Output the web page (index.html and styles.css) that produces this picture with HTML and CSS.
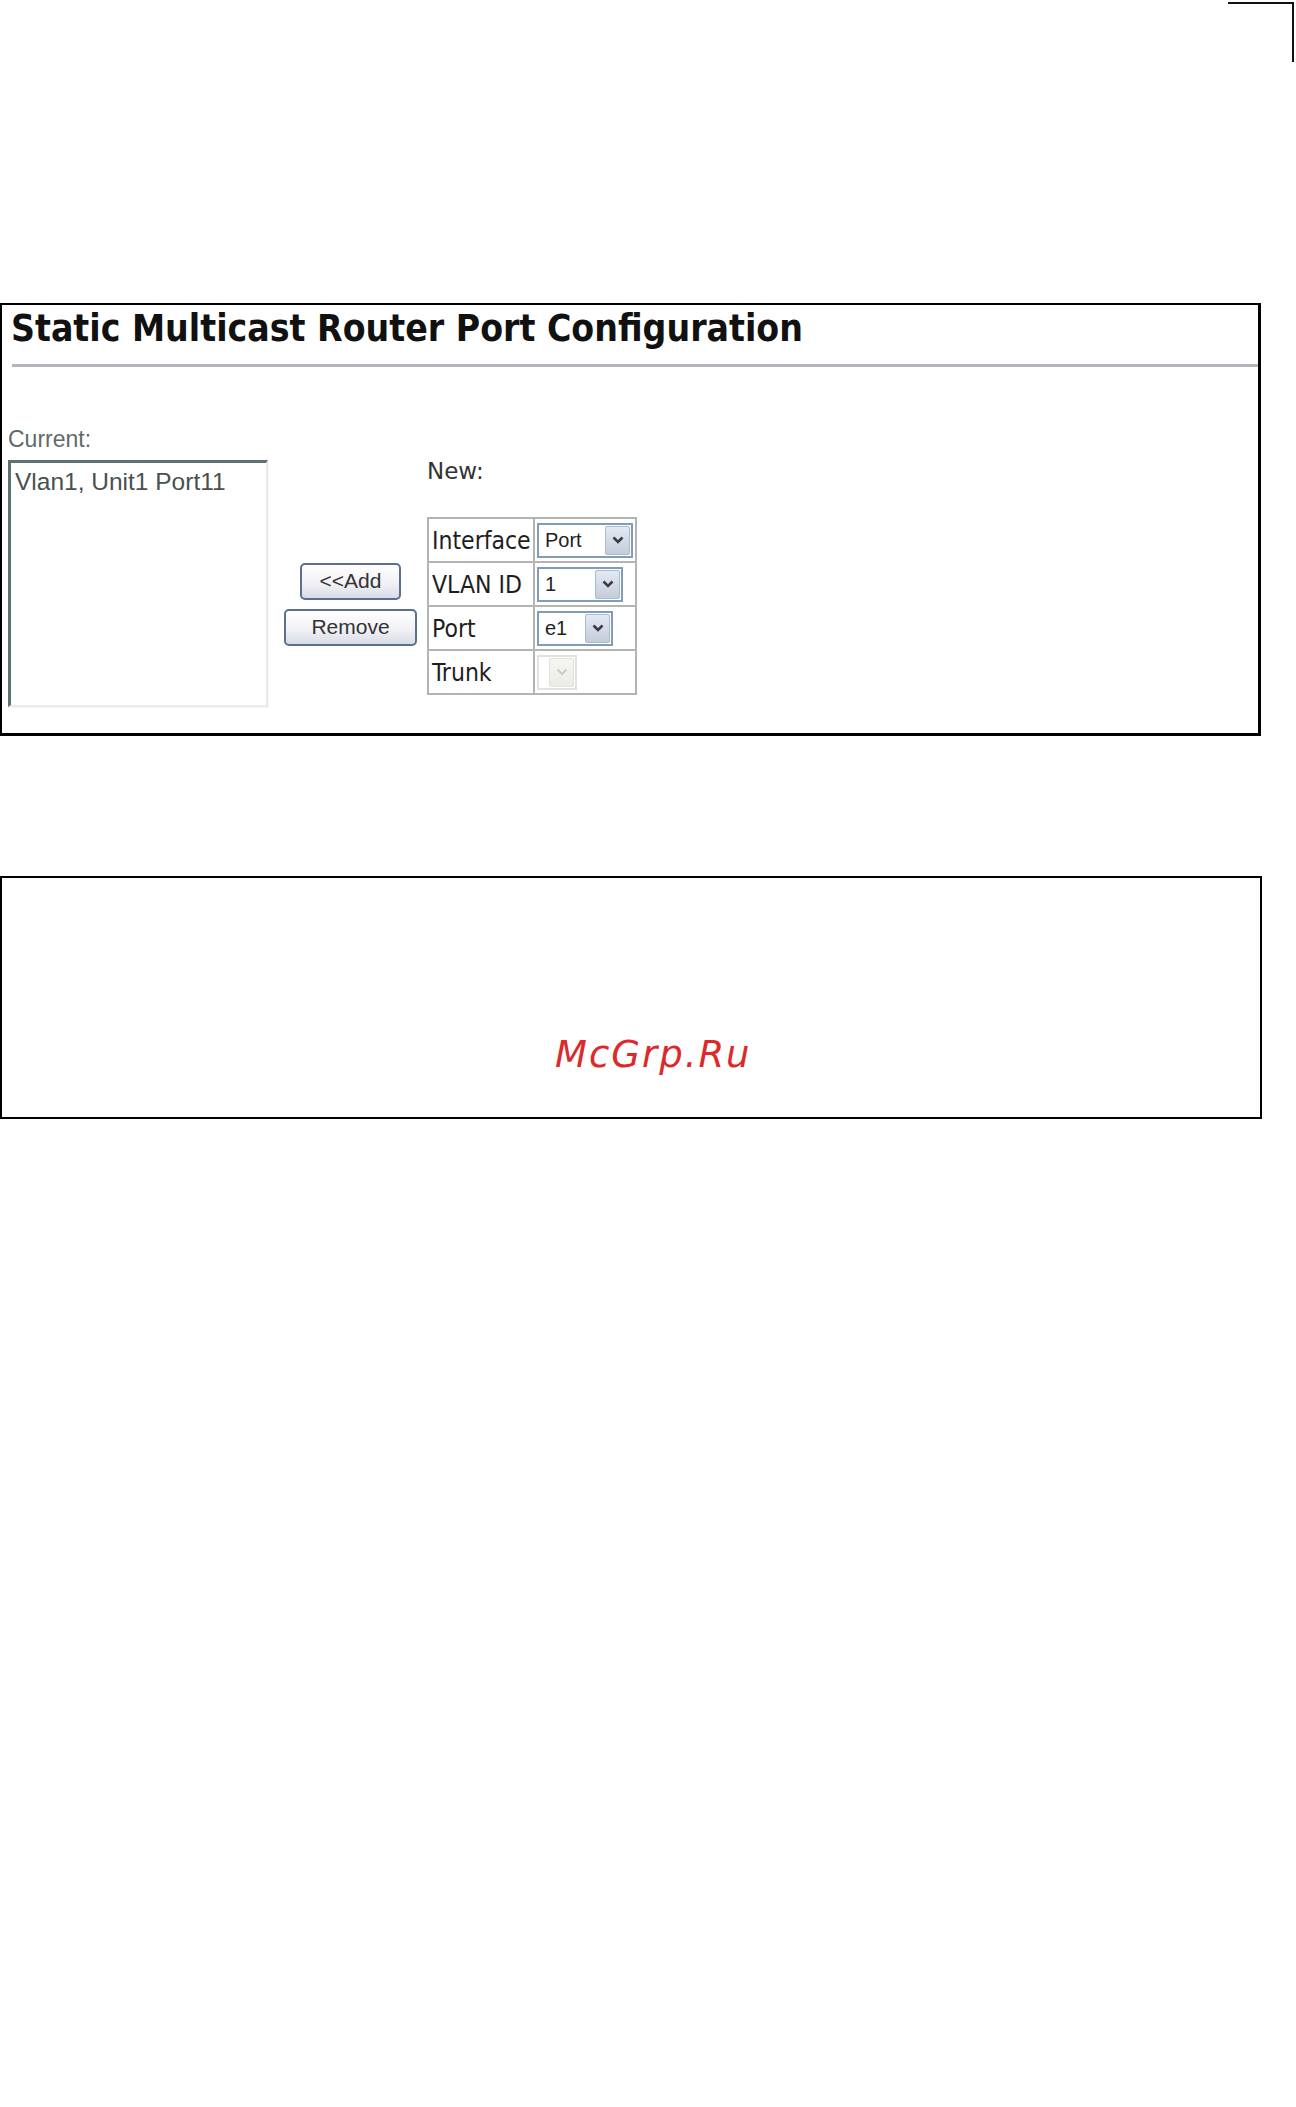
FILE: index.html
```html
<!DOCTYPE html>
<html lang="en">

<head>
    <meta charset="UTF-8">
    <title>Static Multicast Router Port Configuration</title>
    <link rel="stylesheet" href="styles.css">
</head>

<body>
    <div class="crop"></div>

    <div class="panel">
        <h1 class="title">Static Multicast Router Port Configuration</h1>
        <div class="rule"></div>

        <div class="content">
            <div class="current">
                <div class="label">Current:</div>
                <div class="listbox">
                    <div class="option">Vlan1, Unit1 Port11</div>
                </div>
            </div>

            <div class="actions">
                <div class="btn add">&lt;&lt;Add</div>
                <div class="btn remove">Remove</div>
            </div>

            <div class="new">
                <div class="newLabel">New:</div>
                <table class="form">
                    <tr>
                        <td class="name">Interface</td>
                        <td class="value">
                            <div class="sel sel-if">
                                <span class="text">Port</span>
                                <span class="arrow"><svg width="12" height="8" viewBox="0 0 12 8"><path d="M1.5 1.5 L6 6 L10.5 1.5" fill="none" stroke="#3a3a4a" stroke-width="2.6"/></svg></span>
                            </div>
                        </td>
                    </tr>
                    <tr>
                        <td class="name">VLAN ID</td>
                        <td class="value">
                            <div class="sel sel-vlan">
                                <span class="text">1</span>
                                <span class="arrow"><svg width="12" height="8" viewBox="0 0 12 8"><path d="M1.5 1.5 L6 6 L10.5 1.5" fill="none" stroke="#3a3a4a" stroke-width="2.6"/></svg></span>
                            </div>
                        </td>
                    </tr>
                    <tr>
                        <td class="name">Port</td>
                        <td class="value">
                            <div class="sel sel-port">
                                <span class="text">e1</span>
                                <span class="arrow"><svg width="12" height="8" viewBox="0 0 12 8"><path d="M1.5 1.5 L6 6 L10.5 1.5" fill="none" stroke="#3a3a4a" stroke-width="2.6"/></svg></span>
                            </div>
                        </td>
                    </tr>
                    <tr>
                        <td class="name">Trunk</td>
                        <td class="value">
                            <div class="sel sel-trunk">
                                <span class="text"></span>
                                <span class="arrow"><svg width="12" height="8" viewBox="0 0 12 8"><path d="M1.5 1.5 L6 6 L10.5 1.5" fill="none" stroke="#c8ccc8" stroke-width="2"/></svg></span>
                            </div>
                        </td>
                    </tr>
                </table>
            </div>
        </div>
    </div>

    <div class="panel2">
        <div class="mark">McGrp.Ru</div>
    </div>
</body>

</html>
```

FILE: styles.css
```css
* {
    margin: 0px;
    padding: 0px;
    box-sizing: border-box;
}

html,
body {
    width: 100%;
    height: 100%;
    background-color: #fff;
}

body {
    font-family: "Liberation Sans", Arial, sans-serif;
    color: #222;
}

.crop {
    margin: 2px 0 0 1228px;
    width: 66px;
    height: 60px;
    border-top: 2px solid #111;
    border-right: 2px solid #111;
}

.panel {
    margin-top: 241px;
    width: 1261px;
    border: 2px solid #000;
    border-right-width: 3px;
    border-bottom-width: 3px;
}

.title {
    padding: 2px 0 0 9px;
    font-family: "DejaVu Sans Condensed", "DejaVu Sans", sans-serif;
    font-stretch: condensed;
    font-weight: bold;
    font-size: 37px;
    line-height: 43px;
    letter-spacing: 0;
    color: #111;
}

.rule {
    margin: 14px 0 0 10px;
    height: 3px;
    background-color: #b4b4bc;
}

.content {
    display: flex;
    align-items: flex-start;
    padding: 0 0 26px 6px;
}

.current {
    padding-top: 59px;
}

.label {
    font-size: 23px;
    line-height: 26px;
    color: #5f6b6b;
}

.listbox {
    margin-top: 8px;
    width: 260px;
    height: 247px;
    border-top: 3px solid #5c7272;
    border-left: 3px solid #5c7272;
    border-right: 2px solid #ececec;
    border-bottom: 2px solid #ececec;
    box-shadow: 1px 1px 0 #f4f4f4;
    padding: 5px 0 0 4px;
}

.option {
    font-size: 24.5px;
    line-height: 27px;
    color: #4a5050;
}

.actions {
    display: flex;
    flex-direction: column;
    align-items: center;
    gap: 9px;
    margin: 196px 0 0 16px;
    width: 133px;
}

.btn {
    height: 37px;
    border: 2px solid #5b7090;
    border-radius: 5px;
    background: linear-gradient(#ffffff, #f2f2f6 55%, #d8dce6);
    text-align: center;
    font-size: 21px;
    line-height: 32px;
    color: #333;
}

.add {
    width: 101px;
}

.remove {
    width: 133px;
}

.new {
    margin: 91px 0 0 10px;
}

.newLabel {
    font-family: "DejaVu Sans", sans-serif;
    font-size: 23px;
    line-height: 26px;
    color: #333;
}

.form {
    margin-top: 33px;
    border-collapse: collapse;
    border: 2px solid #c4c4c4;
}

.form td {
    border: 2px solid #b4b4b4;
    height: 44px;
    padding: 0;
}

.form .name {
    width: 106px;
    padding-left: 3px;
    font-family: "DejaVu Sans Condensed", "DejaVu Sans", sans-serif;
    font-stretch: condensed;
    font-size: 24.5px;
    color: #1e1e1e;
}

.form .value {
    width: 102px;
    padding-left: 2px;
}

.sel {
    display: flex;
    align-items: stretch;
    height: 35px;
    border: 2px solid #7f9db9;
    background-color: #fff;
}

.sel .text {
    flex: 1;
    padding-left: 6px;
    font-size: 20px;
    line-height: 31px;
    color: #222;
}

.sel .arrow {
    display: flex;
    align-items: center;
    justify-content: center;
    width: 25px;
    margin: 1px;
    border: 1px solid #aabad2;
    border-radius: 2px;
    background: linear-gradient(#e4eaf4, #c4ccd8);
}

.sel-if {
    width: 96px;
}

.sel-vlan {
    width: 86px;
}

.sel-port {
    width: 76px;
}

.sel-trunk {
    width: 40px;
    border-color: #e2e2de;
}

.sel-trunk .arrow {
    border-color: #e0e2dc;
    background: linear-gradient(#f6f6f2, #ecece6);
}

.panel2 {
    margin-top: 140px;
    width: 1262px;
    height: 243px;
    border: 2px solid #000;
    padding: 155px 0 0 553px;
}

.mark {
    font-family: "DejaVu Sans", sans-serif;
    font-style: italic;
    font-size: 37px;
    line-height: 43px;
    letter-spacing: 2px;
    color: #dc2a2a;
}
```
